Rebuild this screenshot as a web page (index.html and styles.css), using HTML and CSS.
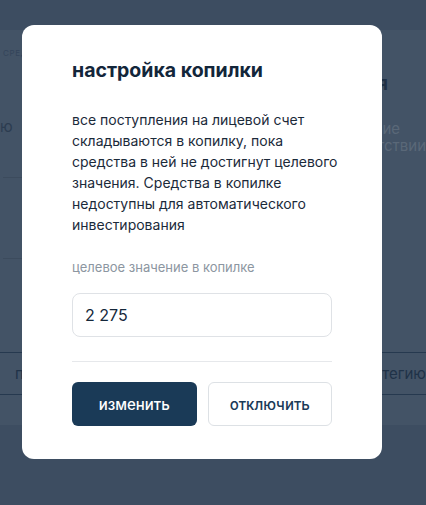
FILE: index.html
```html
<!DOCTYPE html>
<html lang="ru">
<head>
<meta charset="utf-8">
<title>настройка копилки</title>
<link rel="stylesheet" href="styles.css">
</head>
<body>
<div class="page">
  <div class="card">
    <div class="col-left">
      <div class="caption">СРЕДСТВА НА СЧЕТЕ</div>
      <div class="row row-first"><span class="row-text">ю</span></div>
      <div class="row row-second"></div>
      <div class="row row-third"></div>
    </div>
    <div class="col-right">
      <div class="r-title">стратегия</div>
      <div class="r-text">
        <span class="r-line r-line-1">условие</span>
        <span class="r-line r-line-2">в соответствии</span>
      </div>
    </div>
    <div class="actions-row">
      <div class="act act-left">пополнить</div>
      <div class="act act-right">стратегию</div>
    </div>
  </div>
</div>

<div class="modal">
  <h2 class="modal-title">настройка копилки</h2>
  <p class="modal-text">все поступления на лицевой счет<br>складываются в копилку, пока<br>средства в ней не достигнут целевого<br>значения. Средства в копилке<br>недоступны для автоматического<br>инвестирования</p>
  <div class="field-label">целевое значение в копилке</div>
  <div class="field">2 275</div>
  <div class="divider"></div>
  <div class="buttons">
    <button class="btn btn-primary">изменить</button>
    <button class="btn btn-secondary">отключить</button>
  </div>
</div>
</body>
</html>
```

FILE: styles.css
```css
* { box-sizing: border-box; }

html, body {
  margin: 0;
  padding: 0;
}

body {
  width: 426px;
  height: 505px;
  overflow: hidden;
  background: #3d4d61;
  font-family: Inter, "Noto Sans", "DejaVu Sans", sans-serif;
}

.page {
  padding-top: 30px;
}

.card {
  height: 395px;
  background: #435366;
  display: grid;
  grid-template-columns: 200px 1fr;
  grid-template-rows: 322px 43px;
}

.col-left {
  display: flex;
  flex-direction: column;
  padding-left: 3px;
}

.caption {
  margin-top: 18px;
  font-size: 8px;
  line-height: 10px;
  letter-spacing: 0.6px;
  color: #33445a;
}

.row {
  border-bottom: 1px solid #3c4b5d;
}

.row-first {
  height: 120px;
  padding-top: 58px;
}

.row-text {
  font-size: 15px;
  line-height: 20px;
  color: #2c3c50;
  margin-left: -3px;
}

.row-second {
  height: 81px;
}

.row-third {
  border-bottom: none;
  flex: 1;
}

.col-right {
  padding-top: 42px;
  display: flex;
  flex-direction: column;
  align-items: flex-end;
  white-space: nowrap;
}

.r-title {
  margin-right: 38px;
  font-size: 19px;
  line-height: 24px;
  font-weight: 700;
  color: #1f3045;
}

.r-text {
  margin-top: 24px;
  display: flex;
  flex-direction: column;
  align-items: flex-end;
  font-size: 15px;
  line-height: 17px;
  color: #5a6878;
}

.r-line-1 {
  margin-right: 26px;
}

.r-line-2 {
  margin-right: 0;
}

.actions-row {
  grid-column: 1 / 3;
  border-top: 1px solid #26394f;
  border-bottom: 1px solid #26394f;
  display: flex;
  justify-content: space-between;
  align-items: center;
  white-space: nowrap;
}

.act {
  font-size: 15px;
  color: #1f3248;
}

.act-left {
  padding-left: 15px;
}

.act-right {
  padding-right: 0;
}

.modal {
  position: fixed;
  left: 22px;
  top: 25px;
  width: 360px;
  background: #ffffff;
  border-radius: 12px;
  padding: 33px 50px 33px;
  display: flex;
  flex-direction: column;
}

.modal-title {
  margin: 0;
  font-size: 19.5px;
  line-height: 24px;
  font-weight: 700;
  color: #13263a;
}

.modal-text {
  margin: 27px 0 0;
  font-size: 14px;
  line-height: 21px;
  color: #1b2a3a;
  white-space: nowrap;
}

.field-label {
  margin-top: 23px;
  font-size: 13px;
  line-height: 18px;
  color: #8c96a1;
}

.field {
  margin-top: 17px;
  height: 44px;
  border: 1px solid #dfe2e6;
  border-radius: 8px;
  padding: 0 12px;
  display: flex;
  align-items: center;
  font-size: 16px;
  color: #14273a;
}

.divider {
  margin-top: 24px;
  height: 1px;
  background: #e6e8eb;
}

.buttons {
  margin-top: 20px;
  display: grid;
  grid-template-columns: 1fr 1fr;
  gap: 11px;
}

.btn {
  height: 44px;
  border-radius: 6px;
  font-family: Inter, "Noto Sans", sans-serif;
  font-size: 15px;
  font-weight: 500;
  padding: 0;
  cursor: pointer;
}

.btn-primary {
  background: #1a3a57;
  border: none;
  color: #ffffff;
}

.btn-secondary {
  background: #ffffff;
  border: 1px solid #dde1e5;
  color: #1a3a57;
}
```
